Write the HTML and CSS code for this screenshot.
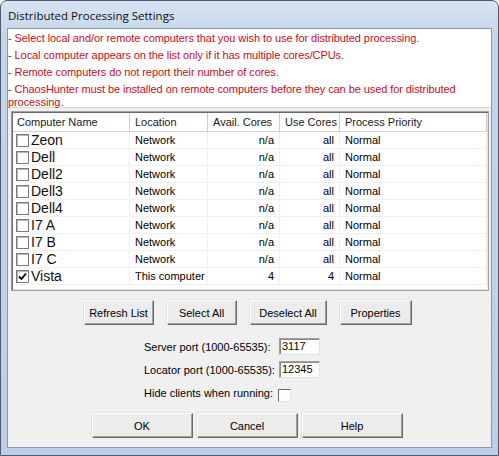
FILE: index.html
```html
<!DOCTYPE html>
<html>
<head>
<meta charset="utf-8">
<link rel="stylesheet" href="styles.css">
</head>
<body>
<div class="window">
  <div class="titlebar"><span class="title">Distributed Processing Settings</span></div>
  <div class="client">
    <div class="notes">
      <p>- Select local and/or remote computers that you wish to use for distributed processing.</p>
      <p>- Local computer appears on the list only if it has multiple cores/CPUs.</p>
      <p>- Remote computers do not report their number of cores.</p>
      <p>- ChaosHunter must be installed on remote computers before they can be used for distributed processing.</p>
    </div>
    <div class="listbox">
      <div class="lv-row lv-head">
        <div class="c name">Computer Name</div>
        <div class="c">Location</div>
        <div class="c">Avail. Cores</div>
        <div class="c">Use Cores</div>
        <div class="c">Process Priority</div>
      </div>
      <div class="lv-row"><div class="c name"><span class="cb"></span><span class="nm">Zeon</span></div><div class="c">Network</div><div class="c num">n/a</div><div class="c num">all</div><div class="c">Normal</div></div>
      <div class="lv-row"><div class="c name"><span class="cb"></span><span class="nm">Dell</span></div><div class="c">Network</div><div class="c num">n/a</div><div class="c num">all</div><div class="c">Normal</div></div>
      <div class="lv-row"><div class="c name"><span class="cb"></span><span class="nm">Dell2</span></div><div class="c">Network</div><div class="c num">n/a</div><div class="c num">all</div><div class="c">Normal</div></div>
      <div class="lv-row"><div class="c name"><span class="cb"></span><span class="nm">Dell3</span></div><div class="c">Network</div><div class="c num">n/a</div><div class="c num">all</div><div class="c">Normal</div></div>
      <div class="lv-row"><div class="c name"><span class="cb"></span><span class="nm">Dell4</span></div><div class="c">Network</div><div class="c num">n/a</div><div class="c num">all</div><div class="c">Normal</div></div>
      <div class="lv-row"><div class="c name"><span class="cb"></span><span class="nm">I7 A</span></div><div class="c">Network</div><div class="c num">n/a</div><div class="c num">all</div><div class="c">Normal</div></div>
      <div class="lv-row"><div class="c name"><span class="cb"></span><span class="nm">I7 B</span></div><div class="c">Network</div><div class="c num">n/a</div><div class="c num">all</div><div class="c">Normal</div></div>
      <div class="lv-row"><div class="c name"><span class="cb"></span><span class="nm">I7 C</span></div><div class="c">Network</div><div class="c num">n/a</div><div class="c num">all</div><div class="c">Normal</div></div>
      <div class="lv-row"><div class="c name"><span class="cb checked"><svg width="9" height="9" viewBox="0 0 9 9"><path d="M1 4.5 L3.5 7 L8 1.5" fill="none" stroke="#000" stroke-width="1.8"/></svg></span><span class="nm">Vista</span></div><div class="c">This computer</div><div class="c num">4</div><div class="c num">4</div><div class="c">Normal</div></div>
    </div>
    <div class="btnrow top-btns">
      <button class="btn w70">Refresh List</button>
      <button class="btn w70">Select All</button>
      <button class="btn w77">Deselect All</button>
      <button class="btn w71">Properties</button>
    </div>
    <div class="ports">
      <label class="lbl">Server port (1000-65535):</label>
      <div class="field">3117</div>
      <label class="lbl">Locator port (1000-65535):</label>
      <div class="field">12345</div>
      <label class="lbl">Hide clients when running:</label>
      <div class="check"></div>
    </div>
    <div class="btnrow bottom-btns">
      <button class="btn big">OK</button>
      <button class="btn big">Cancel</button>
      <button class="btn big">Help</button>
    </div>
  </div>
</div>
</body>
</html>
```

FILE: styles.css
```css
html, body {
  margin: 0;
  padding: 0;
  background: #ffffff;
}
body {
  width: 499px;
  height: 456px;
  overflow: hidden;
  font-family: "Liberation Sans", Arial, sans-serif;
  font-size: 11px;
  color: #000;
}
.window {
  width: 499px;
  height: 456px;
  box-sizing: border-box;
  border: 1px solid #4c5a6c;
  border-radius: 7px 7px 0 0;
  background: linear-gradient(#d6e3f2, #c3d5ea 40px, #bccfe6);
  padding: 0 6px 7px 6px;
  display: flex;
  flex-direction: column;
}
.titlebar {
  height: 27px;
  flex: none;
  display: flex;
  align-items: center;
  padding-left: 1px;
  padding-top: 1px;
  box-sizing: border-box;
}
.title {
  font-family: "Open Sans", "Noto Sans", sans-serif;
  font-size: 11.5px;
  color: #101010;
}
.client {
  flex: 1;
  background: #f0f0f0;
  border: 1px solid #8499b3;
  display: flex;
  flex-direction: column;
  min-height: 0;
}
.notes {
  background: #ffffff;
  height: 79px;
  box-sizing: border-box;
  padding: 3px 4px 0 0;
  color: #c20e1e;
  line-height: 13px;
  letter-spacing: -0.08px;
  border-bottom: 1px solid #d9d9d9;
}
.notes p {
  margin: 0 0 4px 0;
}
.listbox {
  margin: 3px 2px 0 3px;
  height: 180px;
  box-sizing: border-box;
  border: 1px solid #a0a0a0;
  box-shadow: inset 1px 1px 0 #696969, inset -1px -1px 0 #e3e3e3;
  background: #ffffff;
  padding: 1px;
  overflow: hidden;
}
.lv-row {
  display: grid;
  grid-template-columns: 117px 78px 72px 60px 1fr;
  height: 17px;
}
.lv-row .c {
  border-right: 1px solid #f0f0f0;
  border-bottom: 1px solid #f0f0f0;
  padding-left: 5px;
  line-height: 16px;
  white-space: nowrap;
  overflow: hidden;
}
.lv-row .c.num {
  text-align: right;
  padding-left: 0;
  padding-right: 5px;
}
.lv-row .c.name {
  padding-left: 3px;
  display: flex;
  align-items: center;
}
.lv-head {
  height: 19px;
}
.lv-head .c {
  border-right: 1px solid #c9cdd3;
  border-bottom: 1px solid #d5d5d5;
  line-height: 18px;
  color: #1a1a1a;
}
.lv-head .c.name {
  padding-left: 4px;
}
.cb {
  width: 11px;
  height: 11px;
  border: 1px solid #7a7a7a;
  box-shadow: inset 1px 1px 0 #b9b9b9;
  background: #ffffff;
  display: inline-flex;
  align-items: center;
  justify-content: center;
  flex: none;
}
.nm {
  font-size: 14px;
  margin-left: 2px;
  line-height: 16px;
  color: #111;
}
.btnrow {
  display: flex;
  justify-content: center;
}
.top-btns {
  margin-top: 9px;
  gap: 13px;
  padding-right: 4px;
}
.btn {
  height: 25px;
  box-sizing: border-box;
  font-family: "Liberation Sans", Arial, sans-serif;
  font-size: 11px;
  color: #000;
  background: #ececec;
  border-top: 1px solid #ffffff;
  border-left: 1px solid #ffffff;
  border-right: 1px solid #6a6a6a;
  border-bottom: 1px solid #6a6a6a;
  box-shadow: inset -1px -1px 0 #a0a0a0, -1px -1px 0 #e3e3e3;
  padding: 0;
  margin: 0;
}
.w70 { width: 70px; }
.w71 { width: 72px; }
.w77 { width: 77px; }
.ports {
  margin-top: 13px;
  margin-left: 136px;
  display: grid;
  grid-template-columns: 135px 41px;
  grid-template-rows: 17px 17px 17px;
  row-gap: 6px;
  align-items: center;
}
.lbl {
  white-space: nowrap;
  color: #000;
}
.field {
  height: 17px;
  box-sizing: border-box;
  background: #ffffff;
  border-top: 1px solid #a0a0a0;
  border-left: 1px solid #a0a0a0;
  border-right: 1px solid #e3e3e3;
  border-bottom: 1px solid #e3e3e3;
  box-shadow: inset 1px 1px 0 #8a8a8a;
  padding-left: 2px;
  line-height: 15px;
}
.check {
  width: 13px;
  height: 13px;
  box-sizing: border-box;
  background: #ffffff;
  border-top: 1px solid #6a6a6a;
  border-left: 1px solid #6a6a6a;
  border-right: 1px solid #e3e3e3;
  border-bottom: 1px solid #e3e3e3;
  margin-top: 5px;
  margin-left: -1px;
}
.bottom-btns {
  margin-top: 12px;
  gap: 4px;
  padding-right: 5px;
}
.big {
  width: 101px;
}
```
